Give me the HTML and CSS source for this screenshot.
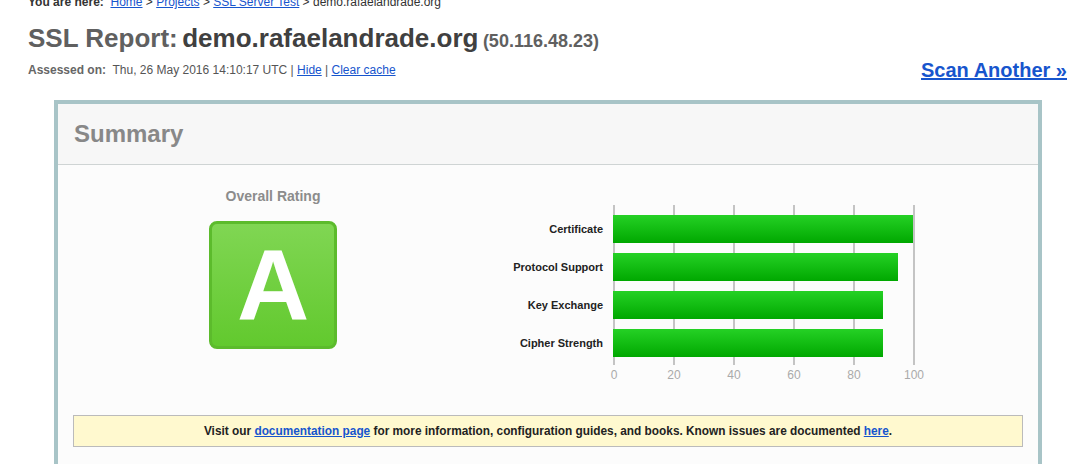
FILE: index.html
```html
<!DOCTYPE html>
<html>
<head>
<meta charset="utf-8">
<link rel="stylesheet" href="styles.css">
</head>
<body>
<div class="top">
  <div class="crumb"><b>You are here:</b>&nbsp; <a href="#">Home</a> &gt; <a href="#">Projects</a> &gt; <a href="#">SSL Server Test</a> &gt; demo.rafaelandrade.org</div>
  <div class="title"><span class="t1">SSL Report:</span> <span class="t2">demo.rafaelandrade.org</span> <span class="ip">(50.116.48.23)</span></div>
  <div class="row">
    <div class="assessed"><b>Assessed on:</b>&nbsp; Thu, 26 May 2016 14:10:17 UTC | <a href="#">Hide</a> | <a href="#">Clear cache</a></div>
    <a class="scan" href="#">Scan Another &raquo;</a>
  </div>
</div>
<div class="report">
  <div class="head">Summary</div>
  <div class="body">
    <div class="summary">
      <div class="rating">
        <div class="rlabel">Overall Rating</div>
        <div class="grade">A</div>
      </div>
      <div class="chart">
        <div class="labels">
          <div class="lab">Certificate</div>
          <div class="lab">Protocol Support</div>
          <div class="lab">Key Exchange</div>
          <div class="lab">Cipher Strength</div>
        </div>
        <div class="plot">
          <div class="track">
            <div class="bar" style="width:300px"></div>
            <div class="bar" style="width:285px"></div>
            <div class="bar" style="width:270px"></div>
            <div class="bar" style="width:270px"></div>
          </div>
          <div class="axis">
            <span>0</span><span>20</span><span>40</span><span>60</span><span>80</span><span>100</span>
          </div>
        </div>
      </div>
    </div>
    <div class="notice">Visit our <a href="#">documentation page</a> for more information, configuration guides, and books. Known issues are documented <a href="#">here</a>.</div>
  </div>
</div>
</body>
</html>
```
FILE: styles.css
```css
html, body {
  margin: 0;
  padding: 0;
  background: #fff;
  font-family: "Liberation Sans", Arial, sans-serif;
  color: #333;
}
a { color: #1755cd; }
.top {
  padding: 0 3px 0 28px;
}
.crumb {
  font-size: 12px;
  color: #333;
  line-height: 14px;
  margin-top: -5px;
}
.title {
  margin-top: 14px;
  font-weight: bold;
  line-height: 30px;
  white-space: nowrap;
}
.t1 { font-size: 26px; color: #606060; }
.t2 { font-size: 26px; color: #404040; }
.ip { font-size: 18px; color: #606060; }
.row {
  display: flex;
  justify-content: space-between;
  align-items: flex-end;
  margin-top: 1px;
}
.assessed {
  font-size: 12px;
  color: #555;
  line-height: 16px;
  margin-bottom: 4px;
}
.assessed b { color: #666; }
.scan {
  font-size: 20px;
  font-weight: bold;
  line-height: 24px;
}
.report {
  margin: 18px 0 0 54px;
  width: 980px;
  border: 4px solid #a8c4c7;
  border-bottom: none;
}
.head {
  background: #f7f7f7;
  height: 60px;
  border-bottom: 1px solid #cfd4d4;
  padding-left: 16px;
  font-size: 24px;
  font-weight: bold;
  color: #888;
  line-height: 60px;
}
.body {
  background: #fcfcfc;
  padding: 0 15px 20px;
}
.summary {
  display: flex;
  height: 250px;
}
.rating {
  width: 200px;
  margin-left: 100px;
  display: flex;
  flex-direction: column;
  align-items: center;
}
.rlabel {
  margin-top: 23px;
  font-size: 14px;
  font-weight: bold;
  color: #8c8c8c;
  line-height: 16px;
}
.grade {
  margin-top: 17px;
  width: 122px;
  height: 122px;
  border: 3px solid #5cbb2c;
  border-radius: 8px;
  background: linear-gradient(#80d653, #62c92e);
  color: #fff;
  font-size: 100px;
  font-weight: bold;
  line-height: 122px;
  text-align: center;
}
.chart {
  display: flex;
  padding-top: 40px;
}
.labels {
  width: 240px;
  padding-top: 10px;
  display: flex;
  flex-direction: column;
  gap: 10px;
}
.lab {
  height: 28px;
  line-height: 28px;
  text-align: right;
  font-size: 11px;
  font-weight: bold;
  color: #222;
  padding-right: 10px;
}
.plot {
  width: 302px;
}
.track {
  height: 150px;
  padding-top: 10px;
  background: repeating-linear-gradient(to right, #c4c4c4 0, #c4c4c4 2px, transparent 2px, transparent 60px);
  display: flex;
  flex-direction: column;
  gap: 10px;
}
.bar {
  height: 28px;
  background: linear-gradient(#25d125, #00a800);
}
.axis {
  display: flex;
  margin-left: -29px;
  margin-top: 2px;
}
.axis span {
  flex: 0 0 60px;
  text-align: center;
  font-size: 12px;
  color: #aaa;
  line-height: 16px;
}
.notice {
  border: 1px solid #bbb;
  background: #fff9cf;
  height: 30px;
  line-height: 30px;
  text-align: center;
  font-size: 11.85px;
  font-weight: bold;
  color: #222;
}
```
